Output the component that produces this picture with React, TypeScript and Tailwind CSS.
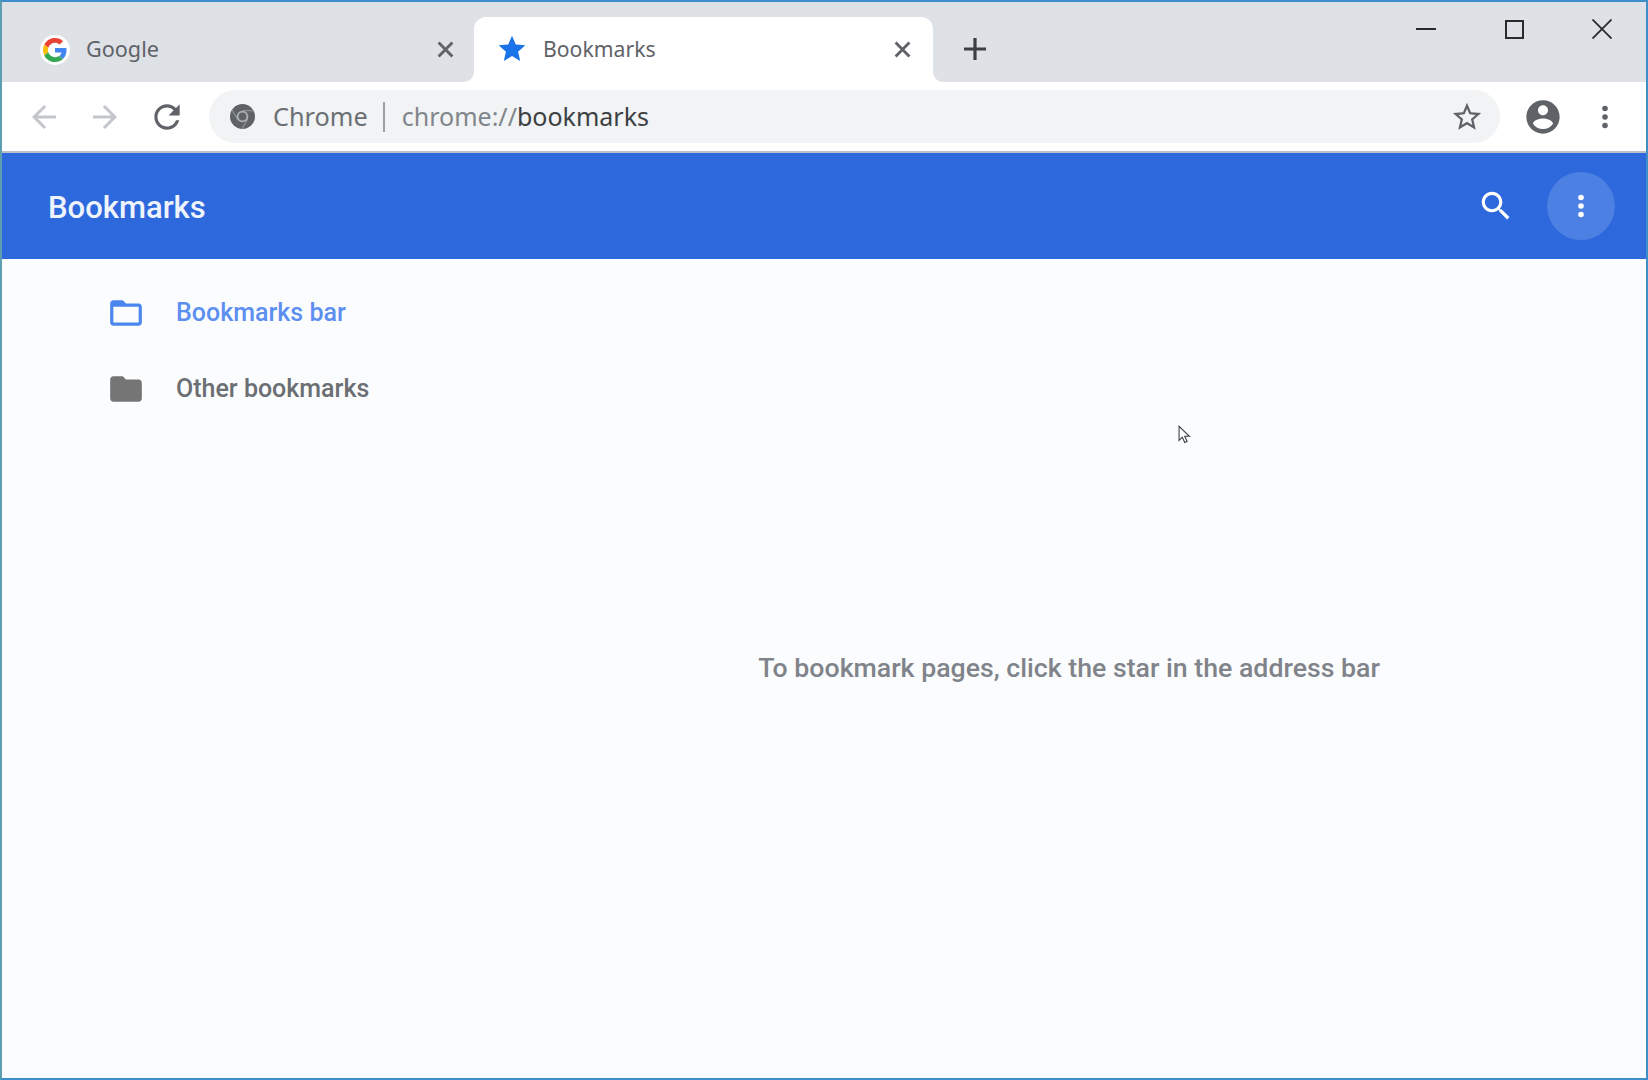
import React from "react";

const P = {
  back: "M20 11H7.83l5.59-5.59L12 4l-8 8 8 8 1.41-1.41L7.83 13H20v-2z",
  forward: "M12 4l-1.41 1.41L16.17 11H4v2h12.17l-5.58 5.59L12 20l8-8z",
  refresh:
    "M17.65 6.35C16.2 4.9 14.21 4 12 4c-4.42 0-7.99 3.58-7.99 8s3.57 8 7.99 8c3.73 0 6.84-2.55 7.73-6h-2.08c-.82 2.33-3.04 4-5.65 4-3.31 0-6-2.69-6-6s2.69-6 6-6c1.66 0 3.14.69 4.22 1.78L13 11h7V4l-2.35 2.35z",
  star: "M12 17.27L18.18 21l-1.64-7.03L22 9.24l-7.19-.61L12 2 9.19 8.63 2 9.24l5.46 4.73L5.82 21z",
  starBorder:
    "M22 9.24l-7.19-.62L12 2 9.19 8.63 2 9.24l5.46 4.73L5.82 21 12 17.27 18.18 21l-1.63-7.03L22 9.24zM12 15.4l-3.76 2.27 1-4.28-3.32-2.88 4.38-.38L12 6.1l1.71 4.04 4.38.38-3.32 2.88 1 4.28L12 15.4z",
  account:
    "M12 2C6.48 2 2 6.48 2 12s4.48 10 10 10 10-4.48 10-10S17.52 2 12 2zm0 3c1.66 0 3 1.34 3 3s-1.34 3-3 3-3-1.34-3-3 1.34-3 3-3zm0 14.2c-2.5 0-4.71-1.28-6-3.22.03-1.99 4-3.08 6-3.08 1.99 0 5.97 1.09 6 3.08-1.29 1.94-3.5 3.22-6 3.22z",
  search:
    "M15.5 14h-.79l-.28-.27C15.41 12.59 16 11.11 16 9.5 16 5.91 13.09 3 9.5 3S3 5.91 3 9.5 5.91 16 9.5 16c1.61 0 3.09-.59 4.23-1.57l.27.28v.79l5 4.99L20.49 19l-4.99-5zm-6 0C7.01 14 5 11.99 5 9.5S7.01 5 9.5 5 14 7.01 14 9.5 11.99 14 9.5 14z",
  folderOutline:
    "M20 6h-8l-2-2H4c-1.1 0-1.99.9-1.99 2L2 18c0 1.1.9 2 2 2h16c1.1 0 2-.9 2-2V8c0-1.1-.9-2-2-2zm0 12H4V8h16v10z",
  folder: "M10 4H4c-1.1 0-1.99.9-1.99 2L2 18c0 1.1.9 2 2 2h16c1.1 0 2-.9 2-2V8c0-1.1-.9-2-2-2h-8l-2-2z",
};

function Icon({ d, className }: { d: string; className: string }) {
  return (
    <svg viewBox="0 0 24 24" className={className} fill="currentColor">
      <path d={d} />
    </svg>
  );
}

function TabClose({ className }: { className: string }) {
  return (
    <svg viewBox="0 0 16 16" className={className} fill="none" stroke="currentColor" strokeWidth="2.7">
      <path d="M1.5 1.5l13 13M14.5 1.5l-13 13" />
    </svg>
  );
}

function Dots({ className }: { className: string }) {
  return (
    <svg viewBox="0 0 8 24" className={className} fill="currentColor">
      <circle cx="4" cy="3.5" r="2.8" />
      <circle cx="4" cy="12" r="2.8" />
      <circle cx="4" cy="20.5" r="2.8" />
    </svg>
  );
}

function GoogleG() {
  return (
    <div className="flex h-[30px] w-[30px] items-center justify-center rounded-full bg-white">
      <svg viewBox="0 0 48 48" className="h-[24px] w-[24px]">
        <path fill="#EA4335" d="M24 9.5c3.54 0 6.71 1.22 9.21 3.6l6.85-6.85C35.9 2.38 30.47 0 24 0 14.62 0 6.51 5.38 2.56 13.22l7.98 6.19C12.43 13.72 17.74 9.5 24 9.5z" />
        <path fill="#4285F4" d="M46.98 24.55c0-1.57-.15-3.09-.38-4.55H24v9.02h12.94c-.58 2.96-2.26 5.48-4.78 7.18l7.73 6c4.51-4.18 7.09-10.36 7.09-17.65z" />
        <path fill="#FBBC05" d="M10.53 28.59c-.48-1.45-.76-2.99-.76-4.59s.27-3.14.76-4.59l-7.98-6.19C.92 16.46 0 20.12 0 24c0 3.88.92 7.54 2.56 10.78l7.97-6.19z" />
        <path fill="#34A853" d="M24 48c6.48 0 11.93-2.13 15.89-5.81l-7.73-6c-2.15 1.45-4.92 2.3-8.16 2.3-6.26 0-11.57-4.22-13.47-9.91l-7.98 6.19C6.51 42.62 14.62 48 24 48z" />
      </svg>
    </div>
  );
}

function ChromeMono() {
  return (
    <svg viewBox="0 0 24 24" className="h-[25px] w-[25px]">
      <circle cx="12" cy="12" r="12" fill="#5f6368" />
      <path d="M12 6.4h10.6M7.2 14.8L1.9 5.6M16.8 14.8l-5.3 9.2" stroke="#8a8f95" strokeWidth="1.2" fill="none" />
      <circle cx="12" cy="12" r="5.6" fill="#aeb2b6" />
      <circle cx="12" cy="12" r="3.8" fill="#5f6368" />
    </svg>
  );
}

function Cursor() {
  return (
    <svg viewBox="0 0 12 18" className="absolute left-[1176px] top-[423px] h-[20px] w-[13px]">
      <path d="M1 1v13l3-3 2.2 5 2.2-1-2.2-4.8H10.5z" fill="#fff" stroke="#3c4043" strokeWidth="1" strokeLinejoin="miter" />
    </svg>
  );
}

export default function App() {
  return (
    <div
      className="relative flex h-[1080px] w-[1648px] flex-col overflow-hidden border-2 border-[#3d8fc9] border-l-[#5f9db0] bg-[#fbfcfe]"
      style={{ fontFamily: '"Noto Sans", Roboto, sans-serif' }}
    >
      {/* Tab strip */}
      <div className="flex h-[80px] shrink-0 bg-[#dee1e6]">
        <div className="flex h-full w-[472px] items-end">
          <div className="flex h-[64px] w-full items-center pb-[1px]">
            <div className="ml-[38px]">
              <GoogleG />
            </div>
            <span className="mb-[2px] ml-[16px] flex-1 text-[21.6px] leading-none text-[#5f6368]">Google</span>
            <TabClose className="mr-[20px] h-[17px] w-[17px] text-[#5f6368]" />
          </div>
        </div>
        <div className="relative mt-[15px] flex h-[65px] w-[459px] items-center rounded-t-[12px] bg-white pb-[1px]">
          <div className="absolute bottom-0 left-[-10px] h-[10px] w-[10px] bg-white">
            <div className="h-full w-full rounded-br-[10px] bg-[#dee1e6]" />
          </div>
          <div className="absolute bottom-0 right-[-10px] h-[10px] w-[10px] bg-white">
            <div className="h-full w-full rounded-bl-[10px] bg-[#dee1e6]" />
          </div>
          <Icon d={P.star} className="ml-[22px] h-[32px] w-[32px] text-[#1a73e8]" />
          <span className="ml-[15px] flex-1 text-[21.2px] leading-none text-[#5f6368]">Bookmarks</span>
          <TabClose className="mr-[22px] h-[17px] w-[17px] text-[#5f6368]" />
        </div>
        <div className="ml-[30px] flex h-full items-center pt-[14px]">
          <svg viewBox="0 0 24 24" className="h-[24px] w-[24px] text-[#3c4043]" fill="none" stroke="currentColor" strokeWidth="3.2">
            <path d="M12 1v22M1 12h22" />
          </svg>
        </div>
        <div className="flex-1" />
        <div className="flex h-[54px] items-center">
          <div className="flex w-[88px] justify-center">
            <div className="h-[2px] w-[20px] bg-[#2b2b2b]" />
          </div>
          <div className="flex w-[88px] justify-center">
            <div className="h-[19px] w-[19px] border-2 border-[#2b2b2b]" />
          </div>
          <div className="flex w-[88px] justify-center">
            <svg viewBox="0 0 20 20" className="h-[20px] w-[20px]" fill="none" stroke="#2b2b2b" strokeWidth="1.8">
              <path d="M0.5 0.5l19 19M19.5 0.5l-19 19" />
            </svg>
          </div>
        </div>
      </div>

      {/* Toolbar */}
      <div className="flex h-[71px] shrink-0 items-center border-b-2 border-[#b9bfc6] bg-white pl-[11px] pr-[10px]">
        <div className="flex w-[61px] justify-center">
          <Icon d={P.back} className="h-[36px] w-[36px] text-[#c3c6ca]" />
        </div>
        <div className="flex w-[61px] justify-center">
          <Icon d={P.forward} className="h-[36px] w-[36px] text-[#c3c6ca]" />
        </div>
        <div className="ml-[1px] flex w-[61px] justify-center">
          <Icon d={P.refresh} className="h-[38px] w-[38px] text-[#5f6368]" />
        </div>
        <div className="ml-[12px] mr-[12px] flex h-[53px] flex-1 items-center rounded-full bg-[#f1f3f4] pl-[21px] pr-[16px]">
          <ChromeMono />
          <span className="ml-[18px] text-[25.3px] leading-none text-[#6b6f74]">Chrome</span>
          <div className="ml-[15px] h-[30px] w-[2px] bg-[#9aa0a6]" />
          <span className="ml-[17px] flex-1 text-[25px] leading-none text-[#80868b]">
            chrome://<span className="text-[#3c4043]">bookmarks</span>
          </span>
          <Icon d={P.starBorder} className="h-[34px] w-[34px] text-[#5f6368]" />
        </div>
        <div className="flex w-[62px] justify-center">
          <Icon d={P.account} className="h-[40px] w-[40px] text-[#5f6368]" />
        </div>
        <div className="flex w-[62px] justify-center">
          <Dots className="h-[24px] w-[8px] text-[#5f6368]" />
        </div>
      </div>

      {/* Blue header */}
      <div
        className="flex h-[106px] shrink-0 items-center justify-between bg-[#2d69dc] pl-[46px] pr-[31px]"
        style={{ fontFamily: "Roboto, sans-serif" }}
      >
        <span className="mt-[2px] text-[31px] font-medium leading-none text-[#eef3fc]">Bookmarks</span>
        <div className="flex items-center gap-[32px]">
          <Icon d={P.search} className="h-[38px] w-[38px] text-white" />
          <div className="flex h-[68px] w-[68px] items-center justify-center rounded-full bg-[#4d80e3]">
            <Dots className="h-[24px] w-[8px] text-white" />
          </div>
        </div>
      </div>

      {/* Body */}
      <div className="flex flex-1" style={{ fontFamily: "Roboto, sans-serif" }}>
        <div className="w-[490px] pl-[105px] pt-[16px]">
          <div className="flex h-[76px] items-center gap-[31px]">
            <Icon d={P.folderOutline} className="h-[38px] w-[38px] text-[#4a86ed]" />
            <span className="mb-[2px] text-[25px] font-medium leading-none text-[#5d8ff0]">Bookmarks bar</span>
          </div>
          <div className="flex h-[76px] items-center gap-[31px]">
            <Icon d={P.folder} className="h-[38px] w-[38px] text-[#757575]" />
            <span className="mb-[2px] text-[25px] font-medium leading-none text-[#6b6f74]">Other bookmarks</span>
          </div>
        </div>
        <div className="flex flex-1 items-center justify-center">
          <span className="text-[26.7px] font-medium leading-none text-[#80848a]">
            To bookmark pages, click the star in the address bar
          </span>
        </div>
      </div>

      <Cursor />
    </div>
  );
}
